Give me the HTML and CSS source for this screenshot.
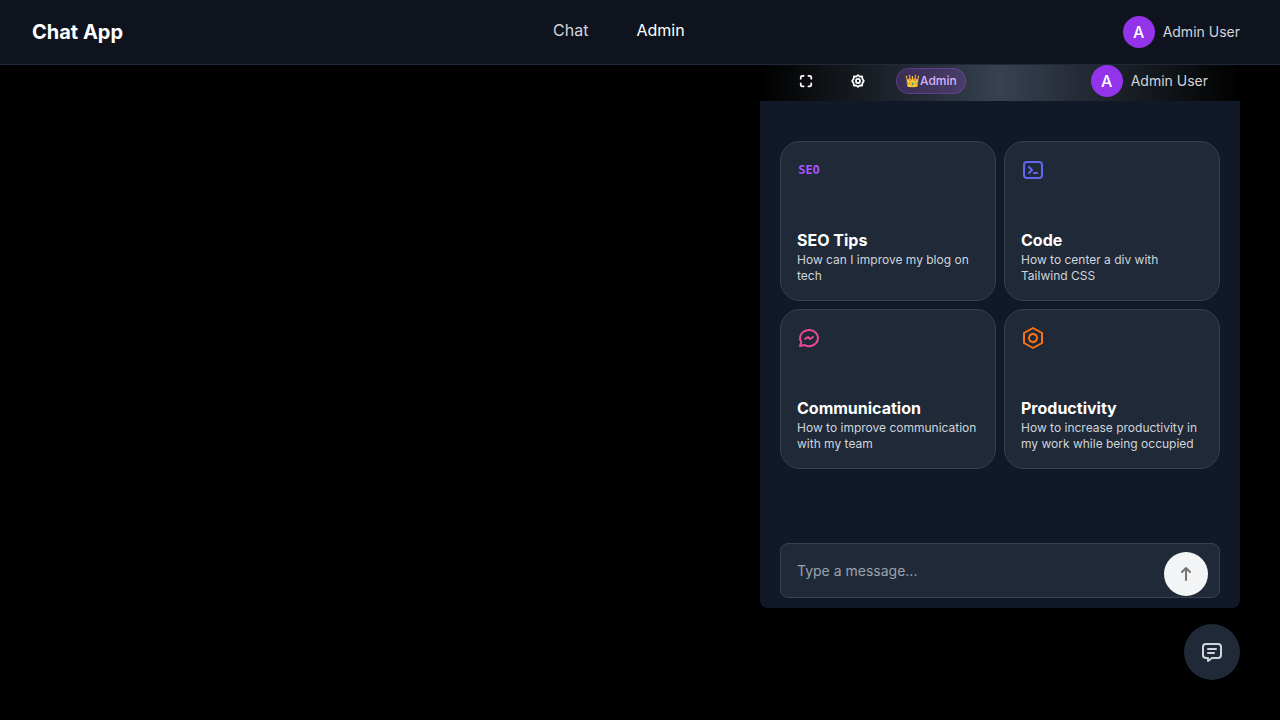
FILE: index.html
```html
<!DOCTYPE html>
<html lang="en">
<head>
<meta charset="utf-8">
<meta name="viewport" content="width=device-width, initial-scale=1">
<title>Chat App</title>
<link rel="stylesheet" href="styles.css">
</head>
<body>
<header class="navbar">
  <h1 class="brand">Chat App</h1>
  <nav class="nav-links">
    <a href="#chat">Chat</a>
    <a href="#admin" class="active">Admin</a>
  </nav>
  <div class="user"><span class="avatar">A</span><span>Admin User</span></div>
</header>
<main class="dock">
  <section class="panel" aria-label="Chat">
    <div class="panel-bar">
      <div class="tools">
        <button class="tool" type="button" aria-label="Full screen">
          <svg viewBox="0 0 24 24"><path d="M3 8V6a3 3 0 0 1 3-3h2M16 3h2a3 3 0 0 1 3 3v2M21 16v2a3 3 0 0 1-3 3h-2M8 21H6a3 3 0 0 1-3-3v-2"/></svg>
        </button>
        <button class="tool" type="button" aria-label="Settings">
          <svg viewBox="0 0 24 24"><path d="M12 2l3 2.500 4-.5.5 4L22 12l-2.500 4-.5 4-4-.5L12 22l-3-2.500-4 .5-.5-4L2 12l2.500-4 .5-4 4 .5z"/><circle cx="12" cy="12" r="3.500"/></svg>
        </button>
        <span class="badge"><span>👑</span><span>Admin</span></span>
      </div>
      <div class="user"><span class="avatar">A</span><span>Admin User</span></div>
    </div>
    <div class="panel-body">
      <div class="cards">
        <button class="card" type="button">
          <span class="icon seo">SEO</span>
          <span class="copy"><strong>SEO Tips</strong><span>How can I improve my blog on tech</span></span>
        </button>
        <button class="card" type="button">
          <svg class="icon code" viewBox="0 0 24 24"><rect x="3" y="4" width="18" height="16" rx="3"/><path d="M8 9l3 3-3 3M13 15h3"/></svg>
          <span class="copy"><strong>Code</strong><span>How to center a div with Tailwind CSS</span></span>
        </button>
        <button class="card" type="button">
          <svg class="icon talk" viewBox="0 0 24 24"><path d="M3 20l1.300-3.900C1.980 12.660 2.870 8.220 6.400 5.730c3.530-2.490 8.590-2.240 11.850.59 3.250 2.840 3.670 7.370.97 10.600-2.700 3.240-7.670 4.150-11.620 2.140L3 20M8 13l3-2 2 2 3-2"/></svg>
          <span class="copy"><strong>Communication</strong><span>How to improve communication with my team</span></span>
        </button>
        <button class="card" type="button">
          <svg class="icon work" viewBox="0 0 24 24"><path d="M12 2l9 5v10l-9 5-9-5V7z"/><path d="M12 7.800l3 1.200 1.200 3-1.200 3-3 1.200L9 15l-1.200-3L9 9z"/></svg>
          <span class="copy"><strong>Productivity</strong><span>How to increase productivity in my work while being occupied</span></span>
        </button>
      </div>
      <form class="composer">
        <input type="text" placeholder="Type a message..." aria-label="Message">
        <button class="send" type="button" aria-label="Send">
          <svg viewBox="0 0 24 24"><path d="M12 21V3M6 9l6-6 6 6"/></svg>
        </button>
      </form>
    </div>
  </section>
  <button class="fab" type="button" aria-label="Toggle chat">
    <svg viewBox="0 0 24 24"><path d="M6 4h12a3 3 0 0 1 3 3v8a3 3 0 0 1-3 3h-6l-4 3v-3H6a3 3 0 0 1-3-3V7a3 3 0 0 1 3-3zM8 9h8M8 13h6"/></svg>
  </button>
</main>
</body>
</html>
```
FILE: styles.css
```css
* { box-sizing: border-box; }
body { margin: 0; min-height: 100vh; background: #000; color: #fff; font-family: Inter, sans-serif; font-size: 16px; line-height: 24px; }
button, input { font: inherit; color: inherit; margin: 0; }
button { border: 0; padding: 0; background: none; cursor: pointer; }
svg { display: block; fill: none; stroke: currentColor; stroke-width: 2; stroke-linecap: round; stroke-linejoin: round; }
.navbar { display: flex; align-items: center; justify-content: space-between; padding: 16px 40px 16px 32px; background: #0f131d; border-bottom: 1px solid #1f2937; }
.brand { margin: 0; font-size: 20px; line-height: 28px; font-weight: 700; }
.nav-links { display: flex; gap: 48px; padding: 0 8px 4px 0; }
.nav-links a { color: #d1d5db; text-decoration: none; }
.nav-links .active { color: #fff; }
.user { display: flex; align-items: center; gap: 8px; font-size: 14px; line-height: 20px; color: #d1d5db; }
.avatar { display: grid; place-items: center; width: 32px; height: 32px; border-radius: 50%; background: #9333ea; color: #fff; font-size: 16px; font-weight: 500; }
.dock { display: flex; flex-direction: column; align-items: flex-end; gap: 16px; padding: 0 40px 40px; }
.panel { width: 100%; max-width: 480px; background: #111827; border-radius: 0 0 8px 8px; }
.panel-bar { display: flex; justify-content: space-between; align-items: center; padding: 0 32px 4px; background: linear-gradient(90deg, #000, #374151, #000); }
.tools { display: flex; align-items: center; }
.tool { display: grid; place-items: center; width: 28px; height: 28px; margin-right: 24px; }
.tool svg { width: 14px; height: 14px; stroke-width: 3; }
.badge { display: flex; align-items: center; padding: 4px 8px; border: 1px solid rgba(168, 85, 247, .3); border-radius: 16px; background: rgba(168, 85, 247, .2); color: #d8b4fe; font-size: 12px; line-height: 16px; font-weight: 500; }
.panel-body { padding: 40px 20px 10px; }
.cards { display: grid; grid-template-columns: 1fr 1fr; gap: 8px; margin-bottom: 74px; }
.card { display: flex; flex-direction: column; justify-content: space-between; align-items: flex-start; min-height: 160px; padding: 16px; border: 1px solid #374151; border-radius: 20px; background: #1f2937; text-align: left; }
.icon { width: 24px; height: 24px; }
.seo { display: grid; place-items: center; color: #a855f7; font-family: "DejaVu Sans Mono", monospace; font-size: 12px; line-height: 24px; font-weight: 700; }
.code { color: #6366f1; }
.talk { color: #ec4899; }
.work { color: #f97316; }
.copy { display: flex; flex-direction: column; font-size: 12px; line-height: 16px; color: #d1d5db; }
.copy strong { font-size: 16px; line-height: 24px; font-weight: 700; color: #fff; }
.composer { position: relative; }
.composer input { display: block; width: 100%; height: 55px; padding: 0 64px 0 16px; border: 1px solid #374151; border-radius: 8px; background: #1f2937; font-size: 14px; }
.composer input::placeholder { color: #9ca3af; opacity: 1; }
.send { position: absolute; right: 12px; bottom: 2px; display: grid; place-items: center; width: 44px; height: 44px; border-radius: 50%; background: #f3f4f6; color: #737373; }
.send svg { width: 16px; height: 16px; stroke-width: 3; }
.fab { display: grid; place-items: center; width: 56px; height: 56px; border-radius: 50%; background: #1f2937; color: #d1d5db; }
.fab svg { width: 24px; height: 24px; }
```
